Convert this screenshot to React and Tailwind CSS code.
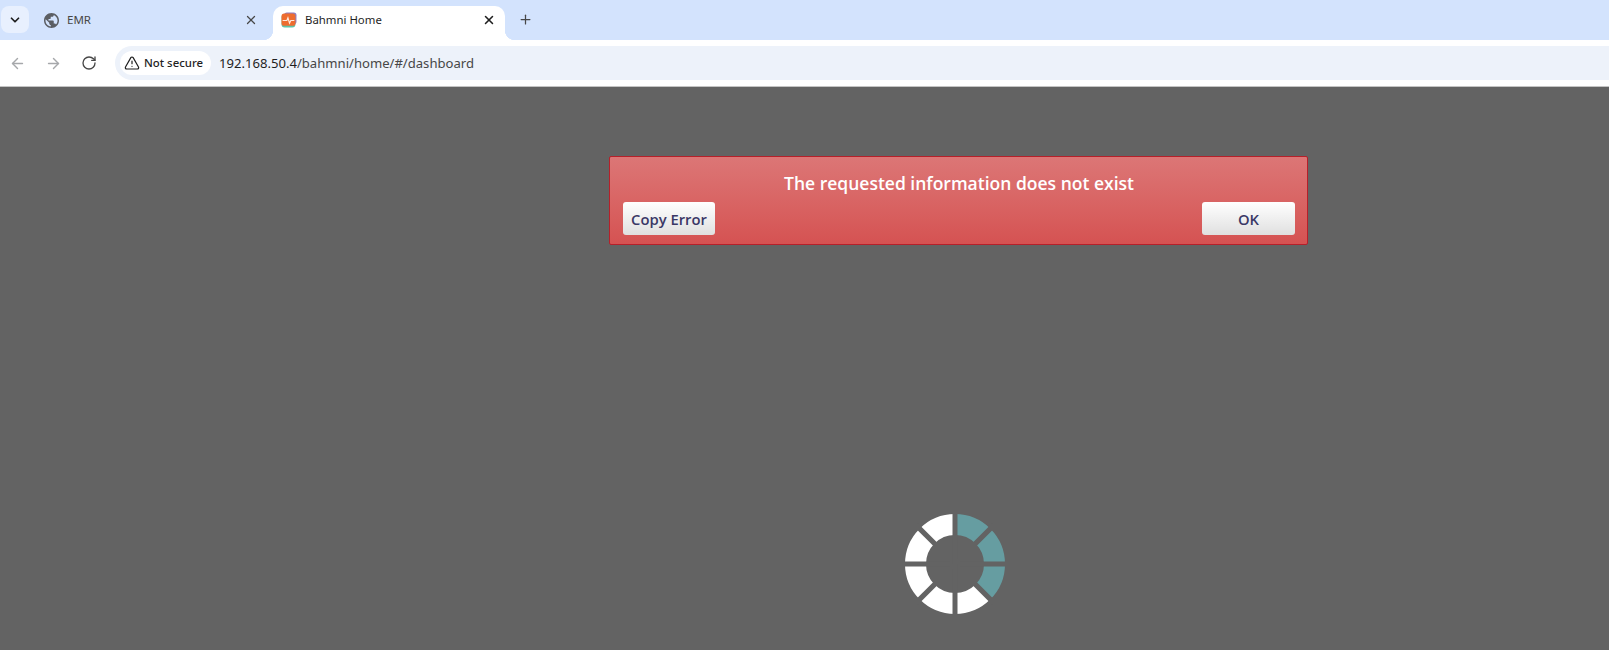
import React from "react";
import { ArrowLeft, ArrowRight, ChevronDown, Plus, RotateCw, TriangleAlert, X } from "lucide-react";

// ring of 8 wedges, gaps are drawn over it as page coloured lines
const wedge = (i) => {
  const a0 = (i * Math.PI) / 4 - Math.PI / 2;
  const a1 = a0 + Math.PI / 4;
  const pt = (r, a) => `${50 + r * Math.cos(a)} ${50 + r * Math.sin(a)}`;
  return `M${pt(50, a0)} A50 50 0 0 1 ${pt(50, a1)} L${pt(29, a1)} A29 29 0 0 0 ${pt(29, a0)} Z`;
};

const Spinner = () => (
  <svg width="100" height="100" viewBox="0 0 100 100" className="block">
    {[0, 1, 2, 3, 4, 5, 6, 7].map((i) => (
      <path key={i} d={wedge(i)} fill={i < 3 ? "#669da1" : "#ffffff"} />
    ))}
    {[0, 45, 90, 135].map((r) => (
      <line key={r} x1="-5" y1="50" x2="105" y2="50" stroke="#636363" strokeWidth="5" transform={`rotate(${r} 50 50)`} />
    ))}
  </svg>
);

const Globe = () => (
  <svg width="15" height="15" viewBox="2 2 20 20" fill="#5b5e63" className="shrink-0">
    <path d="M12 2C6.48 2 2 6.48 2 12s4.48 10 10 10 10-4.48 10-10S17.52 2 12 2zm-1 17.93c-3.95-.49-7-3.85-7-7.93 0-.62.08-1.21.21-1.79L9 15v1c0 1.1.9 2 2 2v1.93zm6.9-2.54c-.26-.81-1-1.39-1.9-1.39h-1v-3c0-.55-.45-1-1-1H8v-2h2c.55 0 1-.45 1-1V7h2c1.1 0 2-.9 2-2v-.41c2.93 1.19 5 4.06 5 7.41 0 2.08-.8 3.97-2.1 5.39z" />
  </svg>
);

const Favicon = () => (
  <svg width="16" height="16" viewBox="0 0 15 15" className="shrink-0">
    <rect x="0.5" y="2" width="13" height="12.5" rx="3" fill="#5fc3a8" />
    <rect x="3" y="0.5" width="11.5" height="11" rx="2.5" fill="#8d7fc0" />
    <rect x="0.5" y="1.5" width="13" height="11.5" rx="2.5" fill="#ee6c2f" />
    <path d="M1.5 8h4l1-2.5 1.5 5 1.2-2.5h3.3" fill="none" stroke="#ffe9dc" strokeWidth="1.1" />
  </svg>
);

const App = () => {
  return (
    <div className="h-[650px] overflow-hidden bg-[#636363] font-['Open_Sans',sans-serif]">
      {/* tab strip */}
      <div className="flex h-10 items-end bg-[#d3e3fd] font-['Noto_Sans',sans-serif]">
        <div className="mb-[7px] ml-px flex h-[27px] w-7 shrink-0 items-center justify-center rounded-lg bg-[#e8f0fe]">
          <ChevronDown size={14} strokeWidth={3} color="#1f1f1f" />
        </div>
        <div className="mb-[5px] flex h-[30px] w-[244px] shrink-0 items-center pr-[15px] pl-[15px]">
          <Globe />
          <span className="ml-[8px] flex-1 text-[11.5px] text-[#474747]">EMR</span>
          <X size={14} strokeWidth={2.2} color="#474747" />
        </div>
        <div className="relative flex h-[34px] w-[232px] shrink-0 items-center rounded-t-[10px] bg-white pr-[9px] pb-[6px] pl-[8px]">
          <span className="absolute bottom-0 left-[-10px] h-2.5 w-2.5 bg-[radial-gradient(circle_at_0_0,#d3e3fd_10px,#ffffff_10.5px)]" />
          <span className="absolute bottom-0 right-[-10px] h-2.5 w-2.5 bg-[radial-gradient(circle_at_100%_0,#d3e3fd_10px,#ffffff_10.5px)]" />
          <Favicon />
          <span className="ml-[8px] flex-1 text-[11.4px] text-[#1f1f1f]">Bahmni Home</span>
          <X size={14} strokeWidth={2.6} color="#1f1f1f" />
        </div>
        <div className="mb-[13px] ml-[13px]">
          <Plus size={15} strokeWidth={2} color="#474747" />
        </div>
      </div>

      {/* toolbar */}
      <div className="flex h-[47px] items-center border-b border-[#c4c4c4] bg-white pl-[9px]">
        <ArrowLeft size={17} strokeWidth={2} color="#a6a8ab" />
        <ArrowRight size={17} strokeWidth={2} color="#a6a8ab" className="ml-[19px]" />
        <RotateCw size={16} strokeWidth={2} color="#474747" className="ml-[19px]" />
        <div className="ml-[18px] flex h-[34px] flex-1 items-center rounded-l-[17px] bg-[#edf2fa] pl-[5px]">
          <div className="flex h-[24px] w-[91px] items-center rounded-xl bg-white pl-[4px]">
            <TriangleAlert size={16} strokeWidth={1.8} color="#1f1f1f" />
            <span className="ml-[4px] text-[11.4px] font-medium whitespace-nowrap text-[#1f1f1f] font-['Noto_Sans',sans-serif]">Not secure</span>
          </div>
          <span className="ml-[8px] pt-px text-[13.1px] text-[#474747] font-['Noto_Sans',sans-serif]">
            <span className="text-[#1f1f1f]">192.168.50.4</span>/bahmni/home/#/dashboard
          </span>
        </div>
      </div>

      {/* page */}
      <div className="flex flex-col items-start">
        <div className="mt-[69px] ml-[609px] flex h-[89px] w-[699px] flex-col rounded-[2px] border border-[#b5202a] bg-gradient-to-b from-[#dc7676] to-[#d55252] pr-[12px] pl-[13px]">
          <p className="mt-[14px] text-center text-[17.5px] leading-6 font-semibold text-white">
            The requested information does not exist
          </p>
          <div className="mt-[7px] flex justify-between">
            <button className="h-[33px] w-[92px] rounded-[3px] bg-gradient-to-b from-white to-[#e0e0e0] pt-[2px] text-[14.8px] font-semibold text-[#3a3866]">
              Copy Error
            </button>
            <button className="h-[33px] w-[93px] rounded-[3px] bg-gradient-to-b from-white to-[#e0e0e0] pt-[2px] text-[14.8px] font-semibold text-[#3a3866]">
              OK
            </button>
          </div>
        </div>
        <div className="mt-[269px] ml-[905px]">
          <Spinner />
        </div>
      </div>
    </div>
  );
};

export default App;
